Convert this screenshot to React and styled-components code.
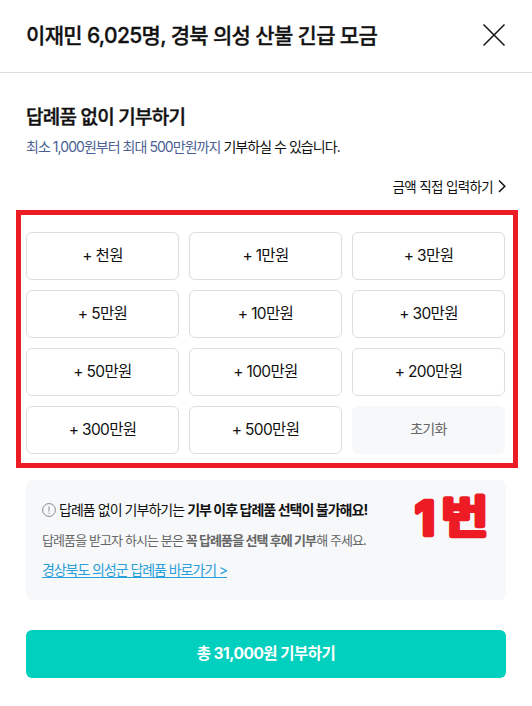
import styled, { createGlobalStyle } from "styled-components"

const GlobalStyle = createGlobalStyle`
    * {
        box-sizing: border-box;
    }
    body {
        margin: 0;
        background: #fff;
        color: #111;
        font-family: Inter, "Noto Sans CJK KR", sans-serif;
    }
    button {
        font-family: inherit;
        cursor: pointer;
    }
`
const Modal = styled.div`
    width: 532px;
    height: 706px;
    overflow: hidden;
`
const Header = styled.header`
    display: flex;
    align-items: center;
    justify-content: space-between;
    height: 73px;
    padding: 0 26px 2px;
    border-bottom: 1px solid #ddd;
`
const Title = styled.h1`
    margin: 2px 0 0;
    font-size: 21px;
    font-weight: 500;
    line-height: 30px;
    letter-spacing: -0.65px;
    white-space: nowrap;
    -webkit-text-stroke: 0.3px #111;
`
const CloseButton = styled.button`
    display: flex;
    padding: 0;
    border: 0;
    background: none;
`
const Body = styled.main`
    display: flex;
    flex-direction: column;
    padding: 30px 26px;
`
const SectionTitle = styled.h2`
    margin: 0;
    font-size: 19px;
    font-weight: 500;
    line-height: 30px;
    letter-spacing: -0.75px;
    -webkit-text-stroke: 0.4px #111;
`
const Guide = styled.p`
    margin: 3px 0 0;
    font-size: 14px;
    line-height: 22px;
    letter-spacing: -0.96px;
    white-space: nowrap;
`
const Limit = styled.span`
    color: #4b5f94;
`
const DirectInput = styled.button`
    display: flex;
    align-items: center;
    align-self: flex-end;
    gap: 5px;
    height: 22px;
    margin-top: 17px;
    padding: 0;
    border: 0;
    background: none;
    color: #111;
    font-size: 13.5px;
    letter-spacing: -0.65px;
`
const AmountFrame = styled.section`
    display: grid;
    grid-template-columns: repeat(3, 153px);
    grid-auto-rows: 48px;
    gap: 10px;
    margin: 13px -12px 0 -10px;
    padding: 17px 8px 9px 5px;
    border: 5px solid #ed1c24;
`
const AmountButton = styled.button`
    padding: 0 0 4px;
    border: 1px solid ${({ $reset }) => ($reset ? "#f6f8fa" : "#ddd")};
    border-radius: 6px;
    background: ${({ $reset }) => ($reset ? "#f6f8fa" : "#fff")};
    color: ${({ $reset }) => ($reset ? "#666" : "#111")};
    font-size: ${({ $reset }) => ($reset ? "14px" : "15.5px")};
    letter-spacing: -0.65px;
`
const Notice = styled.section`
    position: relative;
    height: 120px;
    margin-top: 12px;
    padding: 19px 16px;
    border-radius: 6px;
    background: #f6f8fa;
`
const NoticeTitle = styled.p`
    display: flex;
    align-items: center;
    gap: 3px;
    margin: 0;
    font-size: 14px;
    line-height: 22px;
    letter-spacing: -0.96px;
    white-space: nowrap;
`
const NoticeText = styled.p`
    margin: 9px 0 0;
    color: #666;
    font-size: 13px;
    line-height: 20px;
    letter-spacing: -0.9px;
    white-space: nowrap;
`
const NoticeLink = styled.a`
    display: inline-block;
    margin-top: 9px;
    color: #2b9fd9;
    font-size: 14px;
    line-height: 22px;
    letter-spacing: -1.07px;
    text-decoration: underline;
    text-decoration-skip-ink: none;
    text-underline-offset: 2px;
    white-space: nowrap;
`
const StepMark = styled.svg`
    position: absolute;
    top: 7px;
    right: 10px;
    fill: #ed1c24;
    stroke: #ed1c24;
    stroke-width: 4.5px;
    stroke-linejoin: round;
    font-weight: 500;
`
const SubmitButton = styled.button`
    height: 48px;
    margin-top: 30px;
    padding: 0 0 4px;
    border: 0;
    border-radius: 6px;
    background: #00d0bd;
    color: #fff;
    font-size: 15.5px;
    font-weight: 700;
    letter-spacing: -0.5px;
`

const amounts = ["천", "1만", "3만", "5만", "10만", "30만", "50만", "100만", "200만", "300만", "500만"]

const App = () => {
  return (
    <Modal>
      <GlobalStyle />
      <Header>
        <Title>이재민 6,025명, 경북 의성 산불 긴급 모금</Title>
        <CloseButton aria-label="닫기">
          <svg width="24" height="24" viewBox="0 0 24 24" fill="none" stroke="#111" strokeWidth="1.5">
            <path d="M1.5 1.5 22.5 22.5M22.5 1.5 1.5 22.5" />
          </svg>
        </CloseButton>
      </Header>
      <Body>
        <SectionTitle>답례품 없이 기부하기</SectionTitle>
        <Guide>
          <Limit>최소 1,000원부터 최대 500만원까지</Limit> 기부하실 수 있습니다.
        </Guide>
        <DirectInput>
          금액 직접 입력하기
          <svg width="8" height="14" viewBox="0 0 8 14" fill="none" stroke="#111" strokeWidth="1.5">
            <path d="M1 1.5 6.8 7.2 1 13" />
          </svg>
        </DirectInput>
        <AmountFrame>
          {amounts.map((amount) => (
            <AmountButton key={amount}>+ {amount}원</AmountButton>
          ))}
          <AmountButton $reset>초기화</AmountButton>
        </AmountFrame>
        <Notice>
          <NoticeTitle>
            <svg width="14" height="14" viewBox="0 0 14 14" fill="none" stroke="#888">
              <circle cx="7" cy="7" r="6.4" />
              <path d="M7 3.5v5M7 9.7v1.2" />
            </svg>
            <span>답례품 없이 기부하기는 <b>기부 이후 답례품 선택이 불가해요!</b></span>
          </NoticeTitle>
          <NoticeText>
            답례품을 받고자 하시는 분은 <b>꼭 답례품을 선택 후에 기부</b>해 주세요.
          </NoticeText>
          <NoticeLink>경상북도 의성군 답례품 바로가기 &gt;</NoticeLink>
          <StepMark width="84" height="60">
            <text x="3" y="48" fontSize="46" fontWeight="700">1</text>
            <text x="0" y="46" fontSize="44" transform="translate(29 0) scale(1.18 1)">번</text>
          </StepMark>
        </Notice>
        <SubmitButton>총 31,000원 기부하기</SubmitButton>
      </Body>
    </Modal>
  )
}

export default App
